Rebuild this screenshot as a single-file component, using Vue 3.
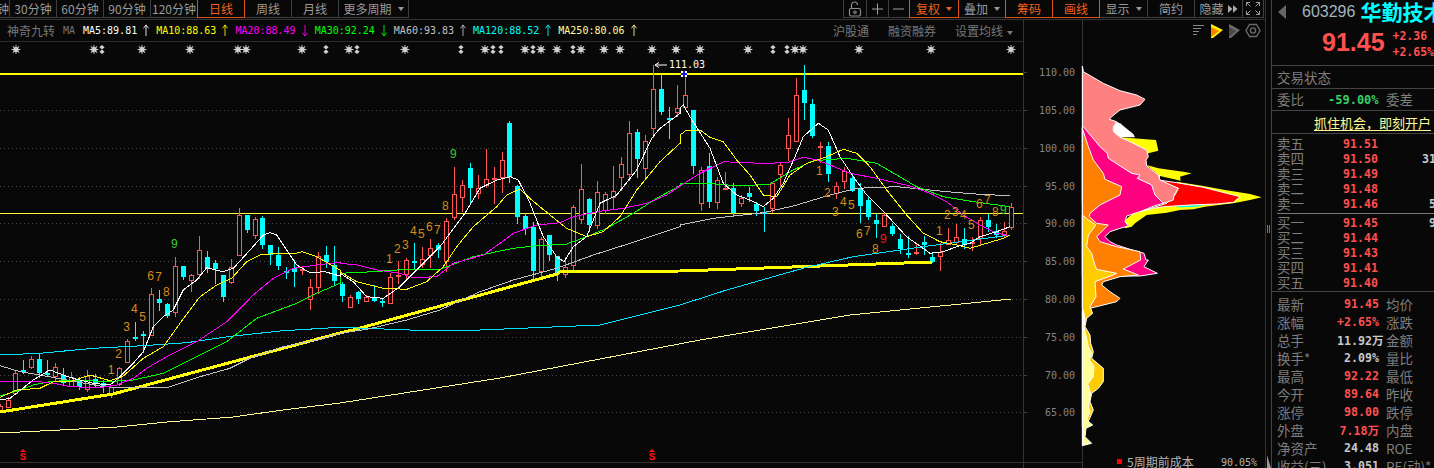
<script setup>
const leftTabs = [
  { t: '钟', w: 10, cls: 'clip' }, { t: '30分钟', w: 48 }, { t: '60分钟', w: 48 }, { t: '90分钟', w: 48 }, { t: '120分钟', w: 48 },
  { t: '日线', w: 48, cls: 'on' }, { t: '周线', w: 48 }, { t: '月线', w: 48 }, { t: '更多周期', w: 71, caret: true },
]
const mas = [
  { t: 'MA5:89.81', c: '#ffffff', up: true }, { t: 'MA10:88.63', c: '#ffff00', up: true },
  { t: 'MA20:88.49', c: '#ff00ff', up: false }, { t: 'MA30:92.24', c: '#00ff00', up: false },
  { t: 'MA60:93.83', c: '#c0c0c0', up: true }, { t: 'MA120:88.52', c: '#00ffff', up: true },
  { t: 'MA250:80.06', c: '#ffff99', up: true },
]

// candle data read in zoom coordinates: [high, top, bottom, low, kind]
const A = [
  [590,600,620,620,'r'],[510,520,578,578,'r'],[480,509,512,518,'c'],[468,478,500,505,'r'],[462,478,519,530,'c'],[480,520,526,526,'c'],
  [490,502,528,543,'r'],[505,525,550,555,'c'],[517,532,558,558,'r'],[530,540,562,566,'c'],[510,528,566,572,'r'],[522,537,552,558,'c'],
  [540,550,562,576,'c'],[560,560,582,590,'r'],[500,505,553,556,'r'],[418,424,485,485,'r'],[366,412,415,420,'c'],[392,402,405,455,'c'],
  [264,283,406,406,'r'],[270,297,308,330,'c'],[310,313,348,350,'c'],[172,199,337,347,'r'],[198,198,230,238,'c'],[222,226,241,272,'r'],
  [108,151,223,235,'r'],[153,171,207,215,'c'],[180,190,208,250,'c'],[225,225,290,302,'c'],[178,202,247,250,'r'],[25,45,166,166,'r'],
  [44,45,90,96,'c'],[52,58,104,113,'r'],[48,55,134,145,'c'],[135,135,164,192,'c'],[142,166,198,207,'c'],[202,212,215,233,'c'],
  [180,205,215,258,'c'],[200,208,211,222,'r'],[238,260,298,326,'r'],[157,168,260,278,'r'],[138,165,185,200,'c'],[138,195,242,252,'c'],
]
const B = [
  [545,552,588,602,'c'],[585,592,622,622,'r'],[572,576,596,608,'c'],[585,592,604,604,'r'],[555,592,602,604,'c'],[595,604,608,617,'c'],
  [518,532,610,610,'r'],[484,525,528,548,'r'],[475,481,522,540,'r'],[430,484,490,503,'c'],[440,476,492,500,'r'],[418,445,466,500,'r'],
  [430,436,449,470,'c'],[355,364,484,512,'r'],[201,283,350,356,'r'],[240,254,290,332,'r'],[190,205,263,308,'c'],[225,263,280,295,'r'],
  [146,238,256,260,'r'],[200,233,236,310,'r'],[156,181,230,275,'r'],[64,70,232,245,'c'],[255,258,350,370,'c'],[340,348,387,402,'c'],
  [365,380,512,540,'c'],[410,418,512,530,'r'],[405,405,465,480,'c'],[468,468,522,540,'c'],[470,502,522,530,'r'],[314,322,496,516,'r'],
  [192,268,358,368,'r'],[295,297,374,392,'c'],[243,277,376,384,'r'],[277,283,330,340,'r'],[198,274,292,324,'r'],[170,193,230,270,'r'],
  [64,100,222,240,'r'],[86,96,177,230,'c'],[105,124,204,232,'r'],
]
const C = [
  [65,89,128,137,'r'],[75,89,112,114,'c'],[107,118,120,138,'c'],[85,108,112,116,'r'],[74,95,107,108,'r'],[110,110,166,173,'c'],
  [167,170,203,210,'r'],[153,166,202,207,'c'],[177,180,202,208,'r'],[172,188,189,189,'r'],[183,188,213,215,'c'],[195,198,203,206,'r'],
  [187,193,197,201,'c'],[202,204,211,215,'c'],[207,212,214,231,'c'],[183,183,208,212,'r'],[163,165,174,185,'r'],[118,135,148,160,'r'],
  [78,95,141,141,'r'],[65,90,103,119,'c'],[99,104,136,137,'c'],[142,146,148,162,'r'],[142,146,174,181,'c'],[182,186,193,198,'r'],
  [167,171,181,188,'r'],[173,178,191,191,'c'],[183,189,206,222,'c'],[197,200,217,219,'c'],[214,220,224,237,'c'],[212,215,226,226,'r'],
  [223,226,234,235,'c'],[234,239,249,253,'c'],[236,253,254,257,'c'],[244,252,254,254,'r'],[236,242,245,254,'c'],[253,257,262,262,'c'],
  [243,252,256,270,'r'],[228,240,244,244,'r'],[224,237,242,244,'r'],[228,239,245,248,'c'],[237,242,244,250,'r'],[217,220,238,245,'r'],
  [214,220,227,231,'c'],[224,231,235,237,'c'],[222,231,235,237,'r'],[203,207,227,229,'r'],
]
const conv = (list, base) => list.map(r => [...r.slice(0, 4).map(v => Math.round(base + v / 3)), r[4]])
const all = [[404, 406, 412, 412, 'r'], ...conv(A, 200), ...conv(B, 100), ...C]
const candles = all.map((r, i) => {
  const x = Math.round(7.5 + 7.968 * (i - 1))
  return { x, hi: r[0], top: r[1], bot: r[2], lo: r[3], red: r[4] === 'r' }
})

const pts = (base, list) => list.map(([x, y]) => `${(base[0] + x / 3).toFixed(1)},${(base[1] + y / 3).toFixed(1)}`).join(' ')
const Z8 = [0, 200], Z9 = [340, 100], Z10 = [680, 60]
const chain = (a, b, c) => `${pts(Z8, a)} ${pts(Z9, b)} ${pts(Z10, c)}`
const lines = [
  { c: '#ffff99', w: 1, p: '0,433 60,430 117,427 167,422 233,417 283,410 340,403 500,378 700,340 850,315 1011,299' },
  { c: '#00e5ff', w: 1, p: pts(Z8, [[0,465],[120,460],[280,445],[430,437],[560,428],[700,408],[850,392],[1020,382]]) + ' 410,330 480,330 600,325 680,305 ' + pts(Z10, [[140,690],[280,650],[380,622],[520,590],[730,560],[990,525]]) },
  { c: '#c0c0c0', w: 1, p: chain(
    [[0,497],[60,515],[120,525],[200,540],[300,558],[340,562],[500,563],[600,530],[690,505],[750,475],[850,440],[950,420],[1020,400]],
    [[80,688],[200,660],[300,630],[420,575],[520,540],[650,505],[760,465],[870,430],[960,400],[1020,380]],
    [[0,495],[100,475],[250,458],[340,438],[450,405],[530,385],[650,380],[800,395],[900,403],[990,407]]) },
  { c: '#00ff00', w: 1, p: chain(
    [[0,588],[60,570],[100,555],[150,545],[220,540],[320,545],[400,540],[490,520],[560,485],[680,425],[770,355],[890,310],[950,280],[1020,250]],
    [[0,520],[100,515],[200,508],[300,508],[400,470],[470,455],[520,445],[590,437],[680,432],[740,410],[800,385],[880,340],[950,295],[1020,257]],
    [[0,372],[80,370],[180,378],[270,372],[340,330],[400,302],[500,295],[590,310],[650,345],[710,380],[790,410],[880,425],[990,440]]) },
  { c: '#ff00ff', w: 1, p: chain(
    [[0,543],[60,545],[120,545],[170,552],[210,560],[300,563],[350,555],[400,535],[440,505],[500,470],[590,425],[680,365],[760,285],[820,235],[880,205],[950,195],[1020,187]],
    [[0,490],[50,495],[110,510],[180,520],[220,533],[290,530],[340,490],[430,465],[480,430],[520,400],[590,375],[660,368],[700,350],[770,335],[850,325],[920,310],[980,285]],
    [[0,378],[60,340],[130,305],[190,308],[250,310],[320,308],[370,292],[410,300],[450,315],[510,340],[590,355],[690,378],[750,400],[800,425],[850,465],[900,495],[950,520],[990,527]]) },
  { c: '#ffff00', w: 1, p: chain(
    [[0,592],[50,570],[120,565],[160,545],[210,545],[270,525],[330,542],[370,528],[430,475],[490,440],[540,370],[600,290],[650,255],[695,235],[740,185],[780,165],[830,160],[880,162],[905,155],[950,170],[1020,210]],
    [[0,515],[50,545],[130,565],[200,568],[260,545],[310,500],[350,440],[400,380],[470,320],[500,285],[540,267],[575,300],[630,345],[680,385],[740,410],[790,395],[840,350],[890,270],[960,185],[1020,130]],
    [[0,225],[20,210],[60,210],[90,232],[130,245],[170,300],[210,345],[250,405],[290,410],[330,345],[380,310],[440,290],[490,268],[530,280],[570,320],[620,390],[680,465],[730,520],[780,545],[830,555],[870,565],[920,550],[970,535],[990,525]]) },
  { c: '#ffffff', w: 1, p: chain(
    [[0,600],[30,595],[100,540],[150,510],[190,525],[220,535],[280,550],[330,555],[360,530],[400,490],[430,455],[460,380],[490,350],[520,330],[550,270],[590,240],[620,203],[670,215],[700,205],[750,150],[790,105],[810,98],[830,105],[860,150],[890,195],[930,218],[975,215],[1020,228]],
    [[0,520],[40,545],[80,590],[130,595],[180,560],[240,500],[300,440],[375,340],[420,265],[470,240],[510,230],[535,240],[570,310],[610,410],[650,470],[672,485],[700,440],[740,410],[780,310],[830,285],[890,210],[935,115],[960,85],[1020,40]],
    [[0,145],[10,135],[30,170],[90,265],[130,370],[170,405],[210,420],[250,440],[280,415],[310,370],[345,290],[370,230],[415,190],[445,210],[480,290],[520,350],[560,405],[620,465],[680,530],[750,580],[790,575],[830,560],[870,550],[900,530],[950,515],[990,500]]) },
]
const grid = [110, 148, 186, 223, 261, 299, 337, 375, 412]
const axis = [['110.00',72],['105.00',110],['100.00',148],['95.00',186],['90.00',223],['85.00',261],['80.00',299],['75.00',337],['70.00',375],['65.00',412]]
const suns = [16,94,142,190,238,246,302,349,405,485,525,541,557,581,604,620,652,676,700,748,795,803,859,931,1011]
const dias = [102,326,357,461,493,501,533,573,773,787]
const rays = [0,45,90,135]

const mk = (base, list, color) => list.map(([t, x, y]) => ({ t, x: base[0] + x / 3, y: base[1] + y / 3 + 4, c: color }))
const orange = '#d98a1c'
const nums = [
  ...mk(Z8, [['1',333,510],['2',356,462],['3',380,380],['4',403,328],['5',428,352],['6',452,227],['7',476,232],['8',499,275]], orange),
  ...mk(Z8, [['9',523,133]], '#2fd02f'),
  ...mk(Z9, [['1',148,478],['2',172,446],['3',196,436],['4',220,392],['5',244,403],['6',268,380],['7',292,390],['8',316,317]], orange),
  ...mk(Z9, [['9',340,163]], '#2fd02f'),
  ...mk(Z10, [['1',418,334],['2',442,400],['3',466,455],['4',490,425],['5',514,436],['6',538,523],['7',562,514],['8',586,568]], orange),
  ...mk(Z10, [['9',610,538]], '#f01c1c'),
  ...mk(Z10, [['1',778,512],['2',802,466],['3',826,456],['4',850,465],['5',874,495],['6',898,433],['7',922,420],['8',946,455]], orange),
  ...mk(Z10, [['9',970,450]], '#2fd02f'),
]

// chip profile, in coordinates of a 3x crop whose origin is (1020,60)
const chips = [
  { f: '#ffff00', s: 'none', p: '300,232 408,240 415,272 385,280 340,262' },
  { f: '#ffff00', s: 'none', p: '380,315 415,325 490,335 515,340 480,350 482,362 420,348' },
  { f: '#ffff00', s: 'none', p: '470,365 550,378 615,390 690,402 725,412 690,420 640,430 595,435 555,440 520,448 480,450 440,458 380,465 345,490 335,500 315,505 315,480 340,460 400,445 470,430' },
  { f: '#ff0000', s: '#ffffff', p: '420,345 415,360 470,368 550,382 660,410 640,427 590,432 510,435 430,440 400,445 360,455 440,430 465,405 475,385 400,358' },
  { f: '#00ffff', s: 'none', p: '470,439 555,435 525,441 470,442' },
  { f: '#ffffff', s: 'none', p: '280,200 290,185 300,190 340,222 345,232 300,232 280,215' },
  { f: '#ff8080', s: '#ffffff', p: '187,18 190,35 250,70 300,92 350,105 375,118 360,135 300,150 275,170 268,178 290,185 280,200 280,215 300,232 330,245 380,270 385,290 378,300 380,318 415,345 420,360 475,385 462,405 460,420 430,430 187,430' },
  { f: '#ff0080', s: '#ffffff', p: '187,200 190,200 240,260 262,280 265,295 335,340 360,345 352,355 395,375 405,405 430,430 405,437 360,455 320,468 315,485 325,498 300,505 270,515 255,530 270,545 290,555 330,568 372,580 378,600 385,600 372,620 412,640 360,648 187,648' },
  { f: '#ff8000', s: '#ffffff', p: '187,205 205,260 220,300 250,340 255,358 305,380 300,405 240,435 210,460 208,470 230,490 265,495 240,520 230,530 240,545 290,560 360,575 362,600 310,627 355,645 300,650 250,665 245,675 270,695 300,715 290,725 210,745 187,745' },
  { f: '#ffcc00', s: '#ffffff', p: '187,465 205,480 228,495 205,525 200,560 215,580 220,600 225,615 230,628 290,640 280,645 225,665 228,710 210,740 218,760 200,775 195,800 210,825 212,850 220,875 215,895 250,925 250,965 235,985 215,1000 210,1025 220,1050 207,1080 195,1090 190,1100 187,1100' },
  { f: '#ffff99', s: '#ffffff', p: '187,750 190,750 195,775 192,800 200,835 205,860 215,880 208,900 222,920 220,950 203,972 212,1000 205,1040 210,1055 200,1080 218,1095 198,1105 195,1130 215,1150 187,1157' },
]

const book1 = [['卖五','91.51',''],['卖四','91.50','318'],['卖三','91.49','3'],['卖二','91.48',''],['卖一','91.46','56']]
const book2 = [['买一','91.45','92'],['买二','91.44',''],['买三','91.43',''],['买四','91.41',''],['买五','91.40','']]
const stats = [
  ['最新','91.45','red','均价'],['涨幅','+2.65%','red','涨跌'],['总手','11.92万','grey','金额'],['换手*','2.09%','grey','量比'],
  ['最高','92.22','red','最低'],['今开','89.64','red','昨收'],['涨停','98.00','red','跌停'],['外盘','7.18万','red','内盘'],
  ['净资产','24.48','grey','ROE'],['收益(三)','3.051','grey','PE(动)*'],
]
</script>

<template>
  <div class="app">
    <div class="main">
      <div class="toolbar">
        <div class="group">
          <div v-for="b in leftTabs" :key="b.t" class="cell" :class="b.cls" :style="{ width: b.w + 'px' }">
            <span>{{ b.t }}</span><i v-if="b.caret" class="caret"></i>
          </div>
        </div>
        <div class="group">
          <div class="cell" style="width: 24px">
            <svg width="16" height="16" viewBox="0 0 16 16" fill="none" stroke="#8a8a8a" stroke-width="1.2"><rect x="2.5" y="7.5" width="11" height="7.5" rx="1.5"/><path d="M4.5 7.5V4a3 3 0 0 1 6 0"/><circle cx="8" cy="11.2" r="1.2"/></svg>
          </div>
          <div class="cell" style="width: 23px">
            <svg width="12" height="12" viewBox="0 0 12 12" stroke="#a0a0a0"><path d="M0 6h11M5.5 .5v11"/></svg>
          </div>
          <div class="cell" style="width: 22px">
            <svg width="12" height="12" viewBox="0 0 12 12" stroke="#a0a0a0"><path d="M0 6h11"/></svg>
          </div>
          <div class="cell on" style="width: 50px"><span>复权</span><i class="caret"></i></div>
          <div class="cell" style="width: 48px"><span>叠加</span><i class="caret"></i></div>
          <div class="cell on" style="width: 48px"><span>筹码</span></div>
          <div class="cell on" style="width: 48px"><span>画线</span></div>
          <div class="cell" style="width: 49px"><span>显示</span><i class="caret"></i></div>
          <div class="cell" style="width: 48px"><span>简约</span></div>
          <div class="cell" style="width: 49px">
            <span>隐藏</span>
            <svg width="10" height="8" viewBox="0 0 10 8" fill="#a8a8a8"><path d="M0 0l4.5 4L0 8zM5 0l4.5 4L5 8z"/></svg>
          </div>
          <div class="cell" style="width: 22px">
            <svg width="14" height="13" viewBox="0 0 14 13" fill="none" stroke="#9a9a9a"><path d="M.5 4V.5H4M.5.5l4 4M10 .5h3.5V4M13.5.5l-4 4M.5 9v3.5H4M.5 12.5l4-4M10 12.5h3.5V9M13.5 12.5l-4-4"/></svg>
          </div>
        </div>
      </div>

      <div class="body">
        <div class="chart-col">
          <div class="ma-row">
            <span class="ma-title">神奇九转</span>
            <span class="ma-name">MA</span>
            <div v-for="m in mas" :key="m.t" class="ma-item" :style="{ color: m.c }">
              <span>{{ m.t }}</span>
              <svg width="7" height="15" viewBox="0 0 7 15" fill="none" :stroke="m.c">
                <path v-if="m.up" d="M3.5 1v13M.5 5l3-4 3 4"/>
                <path v-else d="M3.5 1v13M.5 10l3 4 3-4"/>
              </svg>
            </div>
            <div class="ma-tools">
              <span>沪股通</span><span>融资融券</span><span>设置均线<i class="caret"></i></span>
            </div>
          </div>

          <svg class="chart" width="1023" height="426" viewBox="0 42 1023 426">
            <line v-for="y in grid" :key="y" x1="0" x2="1023" :y1="y + 0.5" :y2="y + 0.5" stroke="#4a4a4a" stroke-dasharray="1 3" shape-rendering="crispEdges"/>
            <rect x="0" y="73" width="1023" height="2" fill="#ffff00"/>
            <rect x="0" y="213" width="1023" height="1" fill="#ffff40"/>
            <rect x="0" y="462" width="1023" height="1" fill="#333"/>

            <g v-for="(c, i) in candles" :key="i">
              <template v-if="c.red">
                <rect :x="c.x" :y="c.hi" width="1" :height="c.lo - c.hi + 1" fill="#ff5555"/>
                <rect v-if="c.bot - c.top > 2" :x="c.x - 1.5" :y="c.top + 0.5" width="4" :height="c.bot - c.top" fill="#080808" stroke="#ff5555" shape-rendering="crispEdges"/>
                <rect v-else :x="c.x - 2" :y="c.top" width="5" height="2" fill="#ff5555"/>
              </template>
              <template v-else>
                <rect :x="c.x" :y="c.hi" width="1" :height="c.lo - c.hi + 1" fill="#00ffff"/>
                <rect :x="c.x - 2" :y="c.top" width="5" :height="Math.max(c.bot - c.top, 2)" fill="#00ffff"/>
              </template>
            </g>

            <polyline points="0,412 113,394 340,333 353,330 557,274 560,272 680,271 932,262" fill="none" stroke="#ffff00" stroke-width="3" shape-rendering="crispEdges"/>
            <polyline v-for="l in lines" :key="l.c" :points="l.p" fill="none" :stroke="l.c" :stroke-width="l.w" shape-rendering="crispEdges"/>

            <g v-for="x in suns" :key="'s' + x" :transform="`translate(${x} 49.5)`" stroke="#d0d0d0" fill="#d0d0d0">
              <circle r="2.6" stroke="none"/>
              <line v-for="r in rays" :key="r" x1="-4.4" x2="4.4" :transform="`rotate(${r})`" stroke-width="1"/>
            </g>
            <g v-for="x in dias" :key="'d' + x" :transform="`translate(${x} 49.5)`" fill="#d0d0d0">
              <polygon points="0,-4.5 2.6,-2.2 0,0 -2.6,-2.2"/>
              <polygon points="0,4.5 2.6,2.2 0,0 -2.6,2.2"/>
            </g>

            <text v-for="(n, i) in nums" :key="'n' + i" class="num" :x="n.x" :y="n.y" :fill="n.c" text-anchor="middle">{{ n.t }}</text>

            <path d="M667 65h-12M655 65l4-2.5M655 65l4 2.5" stroke="#fff" fill="none"/>
            <text class="mono" x="669" y="68" fill="#ffffff">111.03</text>
            <rect x="681" y="71" width="6" height="6" fill="#ffffff"/>
            <rect x="681" y="73" width="6" height="2" fill="#1020d0"/>
            <rect x="683" y="71" width="2" height="2" fill="#1020d0"/>
            <rect x="683" y="75" width="2" height="2" fill="#1020d0"/>

            <g v-for="x in [23, 652]" :key="'m' + x" fill="#ff1010">
              <polygon :points="`${x - 3},452 ${x},449 ${x + 3},452`"/>
              <text class="mark" :x="x" y="460" text-anchor="middle">S</text>
            </g>
          </svg>
        </div>

        <svg class="chips" width="242" height="448" viewBox="1023 20 242 448">
          <rect x="1023" y="20" width="1" height="448" fill="#333"/>
          <rect x="1082" y="20" width="1" height="46" fill="#333"/>
          <rect x="1082" y="445" width="1" height="23" fill="#333"/>
          <rect x="1023" y="462" width="59" height="1" fill="#333"/>
          <g v-for="a in axis" :key="a[0]">
            <rect x="1024" :y="a[1]" width="3" height="1" fill="#444"/>
            <text class="mono" x="1075" :y="a[1] + 4" fill="#858585" text-anchor="end">{{ a[0] }}</text>
          </g>
          <g transform="translate(1020 60) scale(0.33333)">
            <polygon v-for="(c, i) in chips" :key="i" :points="c.p" :fill="c.f" :stroke="c.s" stroke-width="3"/>
          </g>
          <rect x="1082" y="66" width="1" height="379" fill="#ffffff"/>

          <path d="M1193 25.5h11M1193 28.5h8M1193 31.5h6M1193 34.5h4" stroke="#888"/>
          <polygon points="1211,24 1223,30 1213,38 1211,38" fill="#ffee00"/>
          <polygon points="1211,27 1219,31 1211,37" fill="#ff8000"/>
          <polygon points="1229,24 1240,30 1231,38 1229,38" fill="#6a6a6a"/>
          <polygon points="1229,27 1236,31 1229,37" fill="#484848"/>
          <g fill="none" stroke="#6a6a6a" stroke-width="1.4">
            <polygon points="1249.5,24.5 1256.5,24.5 1260,30.5 1256.5,36.5 1249.5,36.5 1246,30.5"/>
            <circle cx="1253" cy="30.5" r="2.6"/>
          </g>

          <rect x="1117" y="459" width="5" height="5" fill="#ff0000"/>
          <text class="cjk" x="1127" y="467" fill="#b5b5b5">5周期前成本</text>
          <text class="mono" x="1221" y="466" fill="#b5b5b5">90.05%</text>
        </svg>
      </div>
    </div>

    <div class="gutter">
      <div class="grip"></div>
      <div class="wedge"></div>
    </div>

    <div class="side">
      <div class="head">
        <div class="head-top">
          <i class="back"></i>
          <span class="code">603296</span>
          <span class="name">华勤技术</span>
        </div>
        <div class="head-price">
          <span class="big">91.45</span>
          <div class="chg"><span>+2.36</span><span>+2.65%</span></div>
        </div>
      </div>
      <div class="sec s22"><span class="lab">交易状态</span></div>
      <div class="sec s21">
        <span class="lab w51">委比</span>
        <span class="pct">-59.00%</span>
        <span class="lab second">委差</span>
      </div>
      <div class="sec s22 ad"><span>抓住机会，即刻开户</span></div>

      <div class="book">
        <div v-for="r in book1" :key="r[0]" class="brow">
          <span class="lab w66">{{ r[0] }}</span><span class="price">{{ r[1] }}</span><span class="qty">{{ r[2] }}</span>
        </div>
      </div>
      <div class="book-line"></div>
      <div class="book b2">
        <div v-for="r in book2" :key="r[0]" class="brow">
          <span class="lab w66">{{ r[0] }}</span><span class="price">{{ r[1] }}</span><span class="qty">{{ r[2] }}</span>
        </div>
      </div>

      <div class="stats">
        <div v-for="s in stats" :key="s[0]" class="srow">
          <span class="lab slab">{{ s[0] }}</span>
          <span class="val" :class="s[2]">{{ s[1] }}</span>
          <span class="lab second">{{ s[3] }}</span>
        </div>
      </div>
    </div>
  </div>
</template>

<style scoped>
.app {
  width: 1434px; height: 468px; background: #080808; display: flex; overflow: hidden;
  font-family: "Noto Sans CJK SC", "Liberation Sans", sans-serif; color: #8a8a8a;
}
.main { width: 1265px; flex: none; display: flex; flex-direction: column; }
.toolbar { height: 19px; flex: none; display: flex; justify-content: space-between; border-bottom: 1px solid #333; padding-right: 1px; box-sizing: content-box; }
.group { display: flex; height: 18px; }
.cell {
  box-sizing: border-box; height: 18px; margin-left: -1px; border: 1px solid #3e3e3e; border-top: 0;
  display: flex; align-items: center; justify-content: center; gap: 4px; overflow: hidden;
  font-size: 12px; line-height: 16px; color: #9a9a9a; white-space: nowrap;
}
.cell.clip { justify-content: flex-end; margin-left: 0; border-left: 0; }
.cell.on { color: #f0601c; border-color: #d9541a; position: relative; z-index: 1; }
.caret { display: inline-block; width: 0; height: 0; border: 3px solid transparent; border-top: 4px solid #9a9a9a; border-bottom: 0; margin-left: 2px; }
.cell.on .caret { border-top-color: #f0601c; }
.body { flex: 1; display: flex; min-height: 0; }
.chart-col { width: 1023px; flex: none; display: flex; flex-direction: column; }
.ma-row {
  height: 21px; flex: none; border-bottom: 1px solid #2c2c2c; display: flex; align-items: center;
  font-family: "DejaVu Sans Mono", monospace; font-size: 10px; padding-left: 7px; white-space: nowrap;
}
.ma-title { font-family: "Noto Sans CJK SC", sans-serif; font-size: 12px; color: #777; width: 56px; }
.ma-name { color: #777; width: 20px; }
.ma-item { display: flex; align-items: center; margin-right: 7px; }
.ma-item svg { margin-left: 6px; width: 6px; }
.ma-tools { margin-left: auto; display: flex; gap: 19px; font-family: "Noto Sans CJK SC", sans-serif; font-size: 12px; color: #777; padding-right: 10px; }
.ma-tools .caret { border-top-color: #777; margin-left: 4px; vertical-align: middle; }
.chart, .chips { display: block; flex: none; }
.mono { font-family: "DejaVu Sans Mono", monospace; font-size: 10px; }
.num { font-family: "Liberation Sans", sans-serif; font-size: 12px; }
.mark { font-family: "Liberation Mono", monospace; font-size: 11px; font-weight: bold; }
.cjk { font-family: "Noto Sans CJK SC", sans-serif; font-size: 12px; }
.gutter { width: 7px; flex: none; border-left: 1px solid #333; border-right: 1px solid #444; box-sizing: border-box; position: relative; display: flex; flex-direction: column; align-items: center; justify-content: flex-end; }
.grip { position: absolute; top: 225px; left: 1px; width: 4px; height: 8px; background: repeating-linear-gradient(90deg, #777 0 1px, transparent 1px 2px); }
.wedge { width: 0; height: 0; border-left: 4px solid #999; border-top: 13px solid transparent; }
.side { flex: 1; min-width: 0; overflow: hidden; white-space: nowrap; }
.head { height: 65px; box-sizing: content-box; border-bottom: 1px solid #444; }
.head-top { height: 23px; display: flex; align-items: center; padding-left: 6px; }
.back { width: 0; height: 0; border-right: 8px solid #666; border-top: 7px solid transparent; border-bottom: 7px solid transparent; }
.code { font-family: "Liberation Sans", sans-serif; font-size: 16px; color: #a3b4bd; margin-left: 16px; }
.name { font-size: 21px; font-weight: bold; color: #00ffff; margin-left: 5px; line-height: 23px; }
.head-price { display: flex; align-items: center; height: 38px; padding-left: 50px; }
.big { font-family: "Liberation Sans", sans-serif; font-size: 25px; font-weight: bold; color: #ff5050; width: 79px; }
.chg { display: flex; flex-direction: column; padding-top: 4px; font-family: "DejaVu Sans Mono", monospace; font-size: 11.5px; font-weight: bold; color: #ff5050; line-height: 16px; }
.sec { display: flex; align-items: center; padding-left: 5px; border-bottom: 1px solid #444; }
.s22 { height: 22px; }
.s21 { height: 21px; }
.lab { font-size: 13.5px; color: #7e7e7e; line-height: 15px; }
.w51 { width: 51px; }
.w66 { width: 66px; flex: none; }
.pct { font-family: "DejaVu Sans Mono", monospace; font-size: 12px; font-weight: bold; color: #35d068; width: 58px; }
.second { color: #7e7e7e; }
.ad { padding-left: 42px; font-size: 13px; color: #ffff99; text-decoration: underline; text-underline-offset: 2px; }
.book { padding: 2px 0 0 5px; }
.book.b2 { padding-top: 0; }
.brow { height: 15px; display: flex; align-items: center; }
.price { font-family: "DejaVu Sans Mono", monospace; font-size: 11.6px; font-weight: bold; color: #ff5050; width: 36px; flex: none; }
.qty { font-family: "DejaVu Sans Mono", monospace; font-size: 11.6px; font-weight: bold; color: #c8c8c8; width: 64px; flex: none; text-align: right; }
.book-line { height: 1px; background: #777; margin: 2px 0 1px 5px; }
.stats { border-top: 1px solid #444; margin-top: 1px; padding: 3px 0 0 5px; }
.srow { height: 18px; display: flex; align-items: center; }
.slab { width: 60px; flex: none; }
.val { width: 42px; flex: none; text-align: right; margin-right: 7px; font-family: "DejaVu Sans Mono", "Noto Sans CJK SC", monospace; font-size: 11.6px; font-weight: bold; }
.val.red { color: #ff5050; }
.val.grey { color: #c8c8c8; }
</style>

<style>
html, body { margin: 0; background: #080808; }
</style>
